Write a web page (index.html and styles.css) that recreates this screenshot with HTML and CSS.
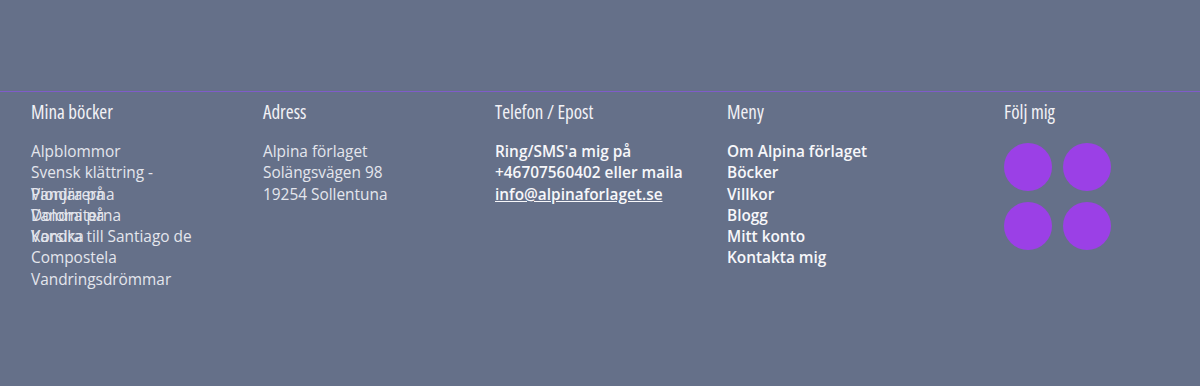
FILE: index.html
```html
<!DOCTYPE html>
<html lang="sv">
<head>
  <meta charset="UTF-8">
  <title>Alpina förlaget</title>
  <link rel="stylesheet" href="styles.css">
</head>
<body>

  <div class="topp"></div>

  <footer class="sidfot">
    <div class="kolumn">
      <h3>Mina böcker</h3>
      <ul class="bocker">
        <li>Alpblommor</li>
        <li>Svensk klättring - Pionjärerna</li>
        <li>Vandra på<br>Dolomiterna</li>
        <li>Vandra på<br>Korsika</li>
        <li>Vandra till Santiago de Compostela</li>
        <li>Vandringsdrömmar</li>
      </ul>
    </div>

    <div class="kolumn">
      <h3>Adress</h3>
      <p>Alpina förlaget<br>Solängsvägen 98<br>19254 Sollentuna</p>
    </div>

    <div class="kolumn fet">
      <h3>Telefon / Epost</h3>
      <p>Ring/SMS'a mig på +46707560402 eller maila <a href="#">info@alpinaforlaget.se</a></p>
    </div>

    <div class="kolumn fet">
      <h3>Meny</h3>
      <ul>
        <li><a href="#">Om Alpina förlaget</a></li>
        <li><a href="#">Böcker</a></li>
        <li><a href="#">Villkor</a></li>
        <li><a href="#">Blogg</a></li>
        <li><a href="#">Mitt konto</a></li>
        <li><a href="#">Kontakta mig</a></li>
      </ul>
    </div>

    <div class="kolumn folj">
      <h3>Följ mig</h3>
      <div class="sociala">
        <a href="#" class="rund"></a>
        <a href="#" class="rund"></a>
        <a href="#" class="rund"></a>
        <a href="#" class="rund"></a>
      </div>
    </div>
  </footer>

</body>
</html>
```

FILE: styles.css
```css
body {
  font-family: "Open Sans", Arial, sans-serif;
  background-color: #657089;
  color: #e4e6ed;
  margin: 0;
}

.topp {
  height: 91px;
}

.sidfot {
  border-top: 1px solid #7f5cc9;
  display: flex;
  padding: 10px 31px 40px 31px;
  font-size: 15.4px;
  line-height: 21.3px;
}

.kolumn {
  width: 164px;
  margin-right: 68px;
}

.kolumn h3 {
  font-family: "Open Sans", sans-serif;
  font-stretch: 75%;
  font-weight: normal;
  font-size: 19px;
  color: #f2f2f6;
  margin: 0 0 19px 0;
  line-height: 20px;
}

.kolumn p {
  margin: 0;
}

.kolumn ul {
  list-style: none;
  margin: 0;
  padding: 0;
}

.kolumn a {
  color: #f7f7fa;
  text-decoration: none;
}

.kolumn p a {
  text-decoration: underline;
}

.fet {
  font-weight: 540;
  color: #f7f7fa;
  width: 200px;
  margin-right: 32px;
}

.bocker li:nth-child(2),
.bocker li:nth-child(3),
.bocker li:nth-child(4) {
  height: 21.3px;
}

.folj {
  margin-left: auto;
  margin-right: 0;
  width: 165px;
}

.sociala {
  display: grid;
  grid-template-columns: 48px 48px;
  gap: 11px;
  padding-top: 2px;
}

.rund {
  width: 48px;
  height: 48px;
  border-radius: 50%;
  background-color: #9b40e6;
}
```
